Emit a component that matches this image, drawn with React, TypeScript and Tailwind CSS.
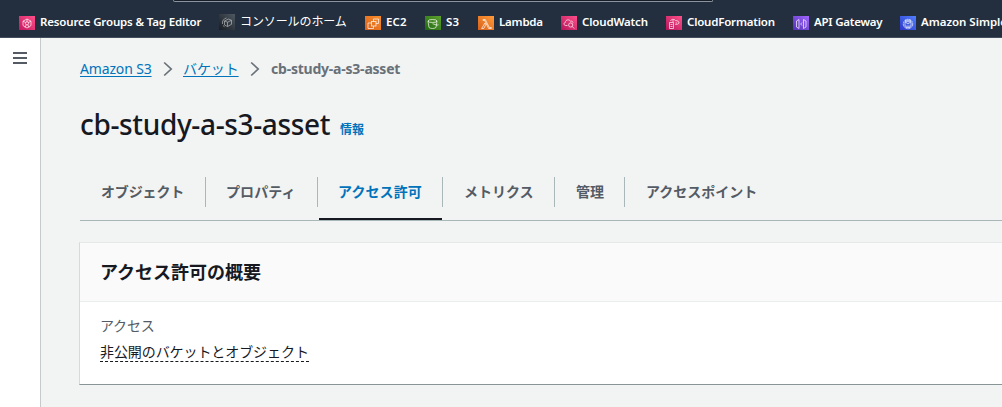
import React from "react";

type Service = {
  label: string;
  box: string;
  text: string;
  tile: string;
  icon: React.ReactNode;
};

const latin = "text-[11.5px] font-semibold -mt-px";

const services: Service[] = [
  {
    label: "Resource Groups & Tag Editor",
    box: "w-[200px]",
    text: `${latin} tracking-[-0.15px]`,
    tile: "h-3.5 from-[#c4145f] to-[#ff4f8b]",
    icon: (
      <>
        <path d="M8 3l4 2.200v4.300L8 12 4 9.500V5.200z" />
        <circle cx="8" cy="7.300" r="1.600" />
        <path d="M4 5.200l2.600 1.300M12 5.200L9.400 6.500M6 11.500l1.200-2.700M10 11.500L8.800 8.800M8 3v2.700" />
      </>
    ),
  },
  {
    label: "コンソールのホーム",
    box: "w-[146px] -mt-0.5",
    text: "mt-px text-[12px] tracking-[-0.1px]",
    tile: "h-4 from-[#181d23] to-[#505963]",
    icon: (
      <g opacity="0.65">
        <path d="M5.500 6l4-2 3 1.300v4l-4 2.200-3-1.500zM5.500 6l3 1.200 4-1.900M8.500 7.200v4.300" />
        <path d="M3.500 9a5 5 0 0 1 4-6M4 10.500l1.500 1.200" />
      </g>
    ),
  },
  {
    label: "EC2",
    box: "w-[60px]",
    text: `${latin} tracking-[0.1px]`,
    tile: "h-3.5 from-[#d8601a] to-[#fa8f2d]",
    icon: (
      <>
        <rect x="6.500" y="5.500" width="4.500" height="4.500" />
        <path d="M8.500 5.500V3h5v4.500H11M6.500 7H3v5.500h5.500V10" />
      </>
    ),
  },
  {
    label: "S3",
    box: "w-[53px]",
    text: `${latin} tracking-[0.1px]`,
    tile: "h-3.5 from-[#1b660f] to-[#5fa32f]",
    icon: (
      <>
        <ellipse cx="7.500" cy="5" rx="4.500" ry="1.500" />
        <path d="M3 5l1 6.500c1.500 1.300 5.500 1.300 7 0L12 5M7.500 7.700L12 9.200l1.500-.4" />
      </>
    ),
  },
  {
    label: "Lambda",
    box: "w-[83px]",
    text: `${latin} tracking-[-0.22px]`,
    tile: "h-3.5 from-[#d8601a] to-[#ff9b38]",
    icon: <path d="M5 3.500h2.300l4 8h2v1h-2.700L6.800 4.500H5zM7 7l.8 1.600-2 3.900H3.600z" />,
  },
  {
    label: "CloudWatch",
    box: "w-[105px]",
    text: `${latin} tracking-[-0.16px]`,
    tile: "h-3.5 from-[#b5105a] to-[#ff4f8b]",
    icon: (
      <>
        <path d="M6.500 9.500H4.700C2.500 9.300 2.500 6.700 4.300 6.500 4.300 3.500 8.500 3 9.500 5.300c1.200-.5 2.300.1 2.500 1.300" />
        <circle cx="9.700" cy="9" r="2.100" />
        <path d="M11.200 10.500l2 2" />
      </>
    ),
  },
  {
    label: "CloudFormation",
    box: "w-[127px]",
    text: `${latin} tracking-[-0.2px]`,
    tile: "h-3.5 from-[#b5105a] to-[#ff4f8b]",
    icon: (
      <>
        <path d="M3.500 6.500h4v6h-4zM4.500 8.500h2M4.500 10.500h2" />
        <path d="M4.500 5c.5-2 4-2.300 4.800-.5 2 0 4 1 3.700 2.500-.4 1-2 1.500-3.700 1.500M6 5h2M9.500 7h1.500" />
      </>
    ),
  },
  {
    label: "API Gateway",
    box: "w-[107px]",
    text: `${latin} tracking-[-0.22px]`,
    tile: "h-3.5 from-[#5530b8] to-[#a166ff]",
    icon: (
      <>
        <path d="M6 3.500L3.500 5v6L6 12.500zM10.500 3.500L13 5v6l-2.500 1.500z" />
        <path d="M9 6.500L7.700 8 9 9.500" />
      </>
    ),
  },
  {
    label: "Amazon Simple Email Service",
    box: "w-[220px]",
    text: `${latin} tracking-[-0.02px]`,
    tile: "h-3.5 from-[#2e35c8] to-[#527fff]",
    icon: (
      <>
        <circle cx="8" cy="8" r="4.700" strokeDasharray="2 .5" />
        <path d="M5 5.700h6v4.500H5zM5 5.700L8 8l3-2.300M5.500 11.500h5M5 4.300h6" />
      </>
    ),
  },
];

const tabs = [
  { label: "オブジェクト", box: "w-[126px] pl-[21px] tracking-[-0.15px]" },
  { label: "プロパティ", box: "w-[112px] pl-5 tracking-[0.1px]" },
  { label: "アクセス許可", box: "w-[125px] pl-5 tracking-[0.1px]", active: true },
  { label: "メトリクス", box: "w-[112px] pl-[21px]" },
  { label: "管理", box: "w-[70px] pl-[21px]" },
  { label: "アクセスポイント", box: "w-[160px] pl-[21px]", last: true },
];

function Chevron({ className }: { className: string }) {
  return (
    <svg
      viewBox="0 0 10 16"
      className={`h-4 w-[10px] shrink-0 ${className}`}
      fill="none"
      stroke="#687078"
      strokeWidth="1.700"
    >
      <path d="M1.200 1.500l7 6.500-7 6.500" />
    </svg>
  );
}

export default function App() {
  return (
    <div className="flex h-[407px] w-full flex-col overflow-hidden bg-[#f2f3f3] font-['Noto_Sans','Noto_Sans_CJK_JP',sans-serif] text-[#16191f]">
      <header className="h-[38px] shrink-0 overflow-hidden border-b border-[#414d5c] bg-[#232f3e]">
        <div className="ml-[173px] h-0.5 w-[540px] rounded-b-[2px] border-x border-b border-[#8b949e] bg-[#161d27]" />
        <nav className="flex h-[35px] items-start pl-[19px] pt-3.5">
          {services.map((s) => (
            <a key={s.label} className={`flex shrink-0 items-start gap-[5px] ${s.box}`}>
              <svg
                viewBox="0 0 16 14"
                className={`w-4 shrink-0 bg-linear-to-tr ${s.tile}`}
                fill="none"
                stroke="#fff"
                strokeOpacity="0.85"
                strokeWidth="0.800"
              >
                {s.icon}
              </svg>
              <span className={`whitespace-nowrap leading-[14px] text-white ${s.text}`}>{s.label}</span>
            </a>
          ))}
        </nav>
      </header>
      <div className="flex min-h-0 flex-1">
        <aside className="w-[41px] shrink-0 border-r border-[#c5cbcb] bg-white pl-[13px] pt-[14px]">
          <svg viewBox="0 0 14 12" className="h-3 w-3.5" fill="#545b64">
            <path d="M0 0h14v2H0zM0 5h14v2H0zM0 10h14v2H0z" />
          </svg>
        </aside>
        <main className="min-w-0 flex-1 pl-[39px] pt-5">
          <nav className="flex h-[22px] items-center text-[14px] leading-[22px]">
            <a className="w-[72px] whitespace-nowrap tracking-[-0.15px] text-[#0073bb] underline underline-offset-2">Amazon S3</a>
            <Chevron className="ml-[11px]" />
            <a className="ml-[10px] w-[56px] whitespace-nowrap tracking-[-0.1px] text-[#0073bb] underline underline-offset-2">バケット</a>
            <Chevron className="ml-[11px]" />
            <span className="ml-[11px] whitespace-nowrap font-bold tracking-[-0.22px] text-[#687078]">cb-study-a-s3-asset</span>
          </nav>
          <div className="mt-[26px] flex h-9 items-center">
            <h1 className="w-[260px] whitespace-nowrap text-[28px] font-medium leading-9 tracking-[-0.35px]">cb-study-a-s3-asset</h1>
            <a className="mt-3 text-[12px] font-bold leading-4 text-[#0073bb]">情報</a>
          </div>
          <div className="mt-[35px] flex h-[44px] border-b border-[#aab7b8]">
            {tabs.map((t) => (
              <div key={t.label} className={`relative h-[30px] shrink-0 whitespace-nowrap text-[14px] font-bold leading-[29px] ${t.last ? "" : "border-r border-[#aab7b8]"} ${t.active ? "text-[#0073bb]" : "text-[#545b64]"} ${t.box}`}>
                {t.label}
                {t.active && <span className="absolute left-px top-[41px] h-0.5 w-[123px] bg-[#16191f]" />}
              </div>
            ))}
          </div>
          <section className="-ml-px mt-[21px] h-[143px] border-y border-l border-b-[#879596] border-l-[#d5dbdb] border-t-[#e5e8e8] bg-white">
            <header className="h-[59px] border-b border-[#eaeded] bg-[#fafafa] pl-5">
              <h2 className="text-[18px] font-bold leading-[58px]">アクセス許可の概要</h2>
            </header>
            <div className="flex flex-col items-start pl-5 pt-[13px]">
              <span className="text-[14px] leading-[22px] tracking-[-0.2px] text-[#545b64]">アクセス</span>
              <span className="mt-[5px] h-5 border-b border-dashed border-[#16191f] text-[14px] leading-5 tracking-[-0.08px]">非公開のバケットとオブジェクト</span>
            </div>
          </section>
        </main>
      </div>
    </div>
  );
}
